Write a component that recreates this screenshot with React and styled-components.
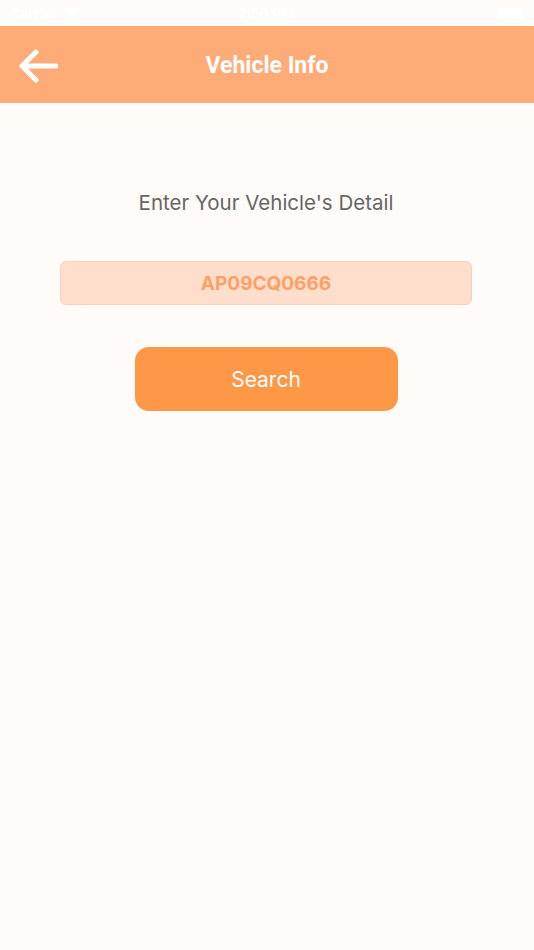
import React, { useState } from "react";
import styled, { createGlobalStyle } from "styled-components";

const GlobalStyle = createGlobalStyle`
  html, body {
    margin: 0;
    padding: 0;
    background: #fffbf8;
  }
  * {
    box-sizing: border-box;
  }
`;

const Screen = styled.div`
  width: 534px;
  min-height: 950px;
  background: #fffbf8;
  display: flex;
  flex-direction: column;
  font-family: "Inter", "Liberation Sans", sans-serif;
`;

const StatusBar = styled.div`
  height: 26px;
  padding: 0 12px 0 10px;
  display: grid;
  grid-template-columns: 1fr auto 1fr;
  align-items: center;
  color: #ffffff;
  font-size: 14px;
  font-weight: 600;
`;

const Carrier = styled.div`
  display: flex;
  align-items: center;
  gap: 6px;
`;

const Battery = styled.div`
  justify-self: end;
  width: 24px;
  height: 11px;
  border-radius: 3px;
  background: #ffffff;
`;

const Header = styled.header`
  height: 77px;
  padding-top: 2px;
  background: #ffab78;
  display: grid;
  grid-template-columns: 80px 1fr 80px;
  align-items: center;
`;

const BackButton = styled.button`
  border: none;
  background: none;
  padding: 0 0 0 18px;
  display: flex;
  align-items: center;
  cursor: pointer;
`;

const Title = styled.h1`
  margin: 0;
  text-align: center;
  color: #ffffff;
  font-family: "Roboto", "Liberation Sans", sans-serif;
  font-size: 23px;
  font-weight: 700;
`;

const Body = styled.main`
  display: flex;
  flex-direction: column;
  align-items: center;
  padding: 84px 62px 0 60px;
`;

const Label = styled.p`
  margin: 0;
  color: #666666;
  font-size: 20.5px;
  line-height: 32px;
`;

const PlateInput = styled.input`
  margin-top: 42px;
  width: 100%;
  height: 44px;
  border: 1px solid #f1d2c0;
  border-radius: 6px;
  background: #ffdfcb;
  color: #ff9f66;
  text-align: center;
  font-family: "Inter", "Liberation Sans", sans-serif;
  font-size: 19px;
  font-weight: 700;
  outline: none;
`;

const SearchButton = styled.button`
  margin-top: 42px;
  width: 263px;
  height: 64px;
  border: none;
  border-radius: 14px;
  background: #ff9846;
  color: #ffffff;
  font-family: "Inter", "Liberation Sans", sans-serif;
  font-size: 21px;
  cursor: pointer;
`;

const ArrowIcon = () => (
  <svg width="40" height="34" viewBox="0 0 40 34" fill="none">
    <path
      d="M18 3 L4 17 L18 31 M4 17 H38"
      stroke="#ffffff"
      strokeWidth="5"
      strokeLinecap="round"
      strokeLinejoin="round"
    />
  </svg>
);

const WifiIcon = () => (
  <svg width="16" height="12" viewBox="0 0 16 12">
    <path d="M8 12 L0 3.5 A11.5 11.5 0 0 1 16 3.5 Z" fill="#ffffff" />
  </svg>
);

export default function App() {
  const [plate, setPlate] = useState("AP09CQ0666");

  return (
    <Screen>
      <GlobalStyle />
      <StatusBar>
        <Carrier>
          Carrier
          <WifiIcon />
        </Carrier>
        <span>2:50 PM</span>
        <Battery />
      </StatusBar>
      <Header>
        <BackButton aria-label="Back">
          <ArrowIcon />
        </BackButton>
        <Title>Vehicle Info</Title>
        <span />
      </Header>
      <Body>
        <Label>Enter Your Vehicle's Detail</Label>
        <PlateInput value={plate} onChange={(e) => setPlate(e.target.value)} />
        <SearchButton>Search</SearchButton>
      </Body>
    </Screen>
  );
}
